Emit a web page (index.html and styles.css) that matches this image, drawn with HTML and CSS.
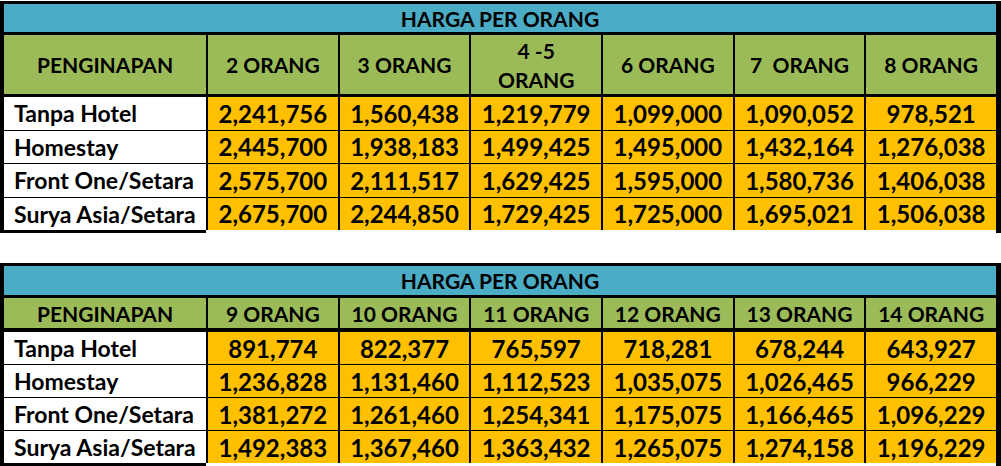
FILE: index.html
```html
<!DOCTYPE html>
<html>
<head>
<meta charset="utf-8">
<link rel="stylesheet" href="styles.css">
</head>
<body>
<div class="sheet t1">
  <div class="title">HARGA PER ORANG</div>
  <div class="head">
    <div>PENGINAPAN</div>
    <div>2 ORANG</div>
    <div>3 ORANG</div>
    <div class="two">4 -5<br>ORANG</div>
    <div>6 ORANG</div>
    <div class="pre">7  ORANG</div>
    <div>8 ORANG</div>
  </div>
  <div class="data">
    <div class="name">Tanpa Hotel</div><div>2,241,756</div><div>1,560,438</div><div>1,219,779</div><div>1,099,000</div><div>1,090,052</div><div>978,521</div>
    <div class="name">Homestay</div><div>2,445,700</div><div>1,938,183</div><div>1,499,425</div><div>1,495,000</div><div>1,432,164</div><div>1,276,038</div>
    <div class="name">Front One/Setara</div><div>2,575,700</div><div>2,111,517</div><div>1,629,425</div><div>1,595,000</div><div>1,580,736</div><div>1,406,038</div>
    <div class="name">Surya Asia/Setara</div><div>2,675,700</div><div>2,244,850</div><div>1,729,425</div><div>1,725,000</div><div>1,695,021</div><div>1,506,038</div>
  </div>
  <div class="foot"></div>
</div>

<div class="sheet t2">
  <div class="title">HARGA PER ORANG</div>
  <div class="head">
    <div>PENGINAPAN</div>
    <div>9 ORANG</div>
    <div>10 ORANG</div>
    <div>11 ORANG</div>
    <div>12 ORANG</div>
    <div>13 ORANG</div>
    <div>14 ORANG</div>
  </div>
  <div class="data">
    <div class="name">Tanpa Hotel</div><div>891,774</div><div>822,377</div><div>765,597</div><div>718,281</div><div>678,244</div><div>643,927</div>
    <div class="name">Homestay</div><div>1,236,828</div><div>1,131,460</div><div>1,112,523</div><div>1,035,075</div><div>1,026,465</div><div>966,229</div>
    <div class="name">Front One/Setara</div><div>1,381,272</div><div>1,261,460</div><div>1,254,341</div><div>1,175,075</div><div>1,166,465</div><div>1,096,229</div>
    <div class="name">Surya Asia/Setara</div><div>1,492,383</div><div>1,367,460</div><div>1,363,432</div><div>1,265,075</div><div>1,274,158</div><div>1,196,229</div>
  </div>
  <div class="foot"></div>
</div>
</body>
</html>
```

FILE: styles.css
```css
html, body {
  margin: 0;
  padding: 0;
  background: #ffffff;
}
body {
  width: 1001px;
  height: 466px;
  overflow: hidden;
  font-family: Lato, "Liberation Sans", sans-serif;
  font-weight: 700;
  color: #000;
}
.sheet {
  border-left: 4px solid #000;
  border-right: 5px solid #000;
  border-top: 3px solid #000;
  display: flex;
  flex-direction: column;
}
.t1 { margin-top: 1px; }
.t2 { margin-top: 30px; }

.title {
  background: #4bacc6;
  height: 28px;
  border-bottom: 3px solid #000;
  display: flex;
  align-items: center;
  justify-content: center;
  font-size: 21px;
}
.t2 .title { height: 29px; }

.head, .data {
  display: grid;
  grid-template-columns: 202px repeat(6, 1fr);
  column-gap: 2px;
  background: #000;
}
.head {
  border-bottom: 4px solid #000;
  height: 58px;
  font-size: 21px;
}
.t2 .head { height: 30px; }
.head > div {
  background: #9bbb59;
  display: flex;
  align-items: center;
  justify-content: center;
  text-align: center;
}
.head > .two {
  line-height: 29px;
  padding-top: 1px;
}
.pre { white-space: pre; }

.data {
  row-gap: 1px;
  grid-auto-rows: 32.5px;
  font-size: 24px;
}
.t2 .data { grid-auto-rows: 32px; }
.data > div {
  background: #ffc000;
  display: flex;
  align-items: center;
  justify-content: center;
}
.data > .name {
  background: #ffffff;
  justify-content: flex-start;
  padding-left: 10px;
  font-size: 23px;
}
.foot {
  width: 202px;
  height: 3px;
  background: #000;
}
```
